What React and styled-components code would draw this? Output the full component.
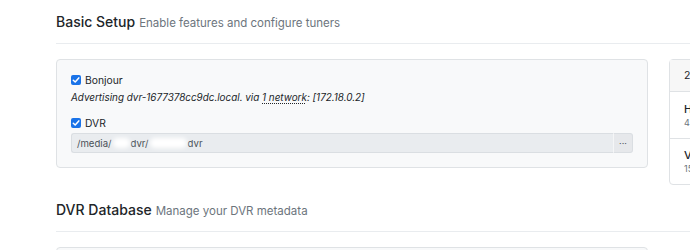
import React from "react";
import styled, { createGlobalStyle } from "styled-components";

const GlobalStyle = createGlobalStyle`
    body {
        margin: 0;
        background: #ffffff;
        font-family: Inter, "Liberation Sans", sans-serif;
        color: #212529;
        overflow: hidden;
    }
`;

const Page = styled.div`
    width: 690px;
    padding: 13px 0 0 56px;
    box-sizing: border-box;
`;

const Section = styled.section`
    margin-bottom: 16px;
`;

const Heading = styled.h2`
    margin: 0;
    font-size: 14px;
    line-height: 17px;
    font-weight: 500;
    color: #212529;
    white-space: nowrap;
`;

const Subtitle = styled.small`
    font-size: 11.5px;
    font-weight: 400;
    color: #6c757d;
    margin-left: 4px;
`;

const Rule = styled.hr`
    margin: 11px 0 15px;
    border: 0;
    border-top: 1px solid #e9ecef;
    width: 700px;
`;

const Row = styled.div`
    display: flex;
    align-items: flex-start;
    gap: 21px;
`;

const Card = styled.div`
    width: 592px;
    flex-shrink: 0;
    box-sizing: border-box;
    background: #f8f9fa;
    border: 1px solid #dfe2e5;
    border-radius: 4px;
    padding: 14px 14px 14px;
    min-height: ${props => props.minHeight || "auto"};
`;

const CheckRow = styled.label`
    display: flex;
    align-items: center;
    gap: 4px;
    font-size: 10.3px;
    line-height: 12px;
    color: #212529;
    margin-top: ${props => props.spaced ? "14px" : "0"};
`;

const Box = styled.span`
    width: 10px;
    height: 10px;
    border-radius: 2px;
    background: #1a73e8;
    display: inline-flex;
    align-items: center;
    justify-content: center;
    flex-shrink: 0;
`;

const Note = styled.p`
    margin: 5px 0 0;
    font-size: 9.9px;
    line-height: 12px;
    font-style: italic;
    color: #212529;
    white-space: nowrap;
`;

const Abbr = styled.abbr`
    text-decoration: underline dotted;
    text-underline-offset: 2px;
    cursor: help;
`;

const InputGroup = styled.div`
    display: flex;
    margin-top: 4px;
    height: 20px;
`;

const PathField = styled.div`
    flex: 1;
    display: flex;
    align-items: center;
    padding: 0 5px;
    background: #e9ecef;
    border: 1px solid #dadee2;
    border-right: 0;
    border-radius: 3px 0 0 3px;
    font-size: 9.6px;
    color: #495057;
`;

const Blur = styled.span`
    display: inline-block;
    width: ${props => props.w}px;
    height: 10px;
    background: #ffffff;
    border-radius: 6px;
    filter: blur(2px);
    margin: 0 1px;
`;

const DotsButton = styled.button`
    width: 20px;
    padding: 0;
    border: 1px solid #dadee2;
    border-left: 1px solid #f5f6f7;
    border-radius: 0 3px 3px 0;
    background: #e6e8eb;
    color: #495057;
    font-size: 9px;
    line-height: 1;
    font-family: inherit;
`;

const Sidebar = styled.div`
    width: 200px;
    flex-shrink: 0;
    border: 1px solid #dfe2e5;
    border-radius: 4px;
    background: #ffffff;
`;

const SideHeader = styled.div`
    height: 32px;
    box-sizing: border-box;
    padding: 0 14px;
    display: flex;
    align-items: center;
    background: #f7f7f7;
    border-bottom: 1px solid #dfe2e5;
    font-size: 10.5px;
    color: #212529;
    white-space: nowrap;
`;

const SideItem = styled.div`
    height: 46px;
    box-sizing: border-box;
    padding: 0 14px;
    display: flex;
    flex-direction: column;
    justify-content: center;
    gap: 1px;
    border-top: ${props => props.first ? "0" : "1px solid #dfe2e5"};
`;

const ItemTitle = styled.div`
    font-size: 11px;
    line-height: 13px;
    font-weight: 500;
    color: #212529;
    white-space: nowrap;
`;

const ItemMeta = styled.div`
    font-size: 9px;
    line-height: 11px;
    color: #6c757d;
    white-space: nowrap;
`;

const Check = () => (
    <svg width="8" height="8" viewBox="0 0 8 8">
        <path d="M1.3 4.2 L3.2 6 L6.8 1.9" fill="none" stroke="#fff" strokeWidth="1.5" strokeLinecap="round" strokeLinejoin="round" />
    </svg>
);

const tuners = [
    { name: "HDHomeRun CONNECT", meta: "4 tuners · 10.0.0.20" },
    { name: "VCR Network Tuner", meta: "15 channels" }
];

const App = () => (
    <>
        <GlobalStyle />
        <Page>
            <Section>
                <Heading>
                    Basic Setup<Subtitle>Enable features and configure tuners</Subtitle>
                </Heading>
                <Rule />
                <Row>
                    <Card>
                        <CheckRow>
                            <Box><Check /></Box>
                            Bonjour
                        </CheckRow>
                        <Note>
                            Advertising dvr-1677378cc9dc.local. via <Abbr title="eth0">1 network</Abbr>: [172.18.0.2]
                        </Note>
                        <CheckRow spaced>
                            <Box><Check /></Box>
                            DVR
                        </CheckRow>
                        <InputGroup>
                            <PathField>
                                /media/<Blur w={17} />dvr/<Blur w={37} />dvr
                            </PathField>
                            <DotsButton>···</DotsButton>
                        </InputGroup>
                    </Card>
                    <Sidebar>
                        <SideHeader>2 Tuners</SideHeader>
                        {tuners.map((tuner, index) => (
                            <SideItem key={tuner.name} first={index === 0}>
                                <ItemTitle>{tuner.name}</ItemTitle>
                                <ItemMeta>{tuner.meta}</ItemMeta>
                            </SideItem>
                        ))}
                    </Sidebar>
                </Row>
            </Section>
            <Section>
                <Heading>
                    DVR Database<Subtitle>Manage your DVR metadata</Subtitle>
                </Heading>
                <Rule />
                <Row>
                    <Card minHeight="60px" />
                </Row>
            </Section>
        </Page>
    </>
);

export default App;
